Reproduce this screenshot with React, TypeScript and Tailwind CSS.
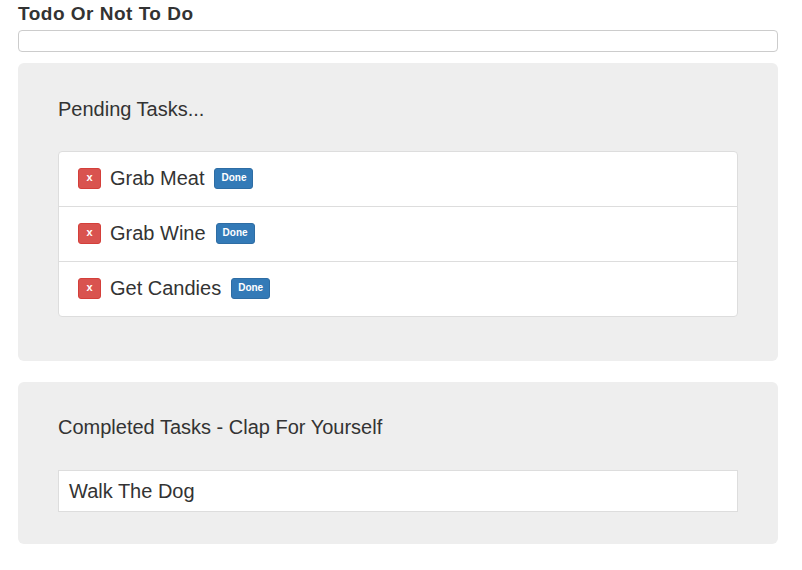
const pending = ["Grab Meat", "Grab Wine", "Get Candies"]
const completed = ["Walk The Dog"]

const font = { fontFamily: '"Liberation Sans", Arial, sans-serif' }

const TaskRow = ({ name, last }: { name: string; last: boolean }) => (
    <li className={`flex items-center gap-[9px] px-[19px] pb-[2px] ${last ? "h-[54px]" : "h-[55px] border-b border-[#ddd]"}`}>
        <button className="flex h-[21px] w-[23px] items-center justify-center rounded-[3px] border border-[#d43f3a] bg-[#d9534f] pb-[2px] text-[11px] font-bold leading-none text-white">
            x
        </button>
        <span className="text-[20px] leading-[24px] text-[#333]">{name}</span>
        <button className="ml-[1px] flex h-[21px] items-center rounded-[3px] border border-[#2e6da4] bg-[#337ab7] px-[6px] text-[10px] font-bold leading-none text-white">
            Done
        </button>
    </li>
)

export default function App() {
    return (
        <div className="min-h-[570px] w-[802px] bg-white pb-[20px] pl-[18px] pr-[24px]" style={font}>
            <h1 className="pt-[4px] text-[19px] font-bold leading-[20px] tracking-[0.5px] text-[#333]">Todo Or Not To Do</h1>
            <input type="text" className="mt-[6px] block h-[22px] w-full rounded-[4px] border border-[#ccc] bg-white" />

            <div className="mt-[11px] rounded-[6px] bg-[#eee] px-[40px] pb-[44px] pt-[34px]">
                <h2 className="text-[20px] leading-[24px] text-[#333]">Pending Tasks...</h2>
                <ul className="mt-[30px] rounded-[4px] border border-[#ddd] bg-white">
                    {pending.map((t, i) => (
                        <TaskRow key={t} name={t} last={i === pending.length - 1} />
                    ))}
                </ul>
            </div>

            <div className="mt-[21px] rounded-[6px] bg-[#eee] px-[40px] pb-[32px] pt-[33px]">
                <h2 className="text-[20px] leading-[24px] text-[#333]">Completed Tasks - Clap For Yourself</h2>
                <ul className="mt-[31px]">
                    {completed.map((t) => (
                        <li key={t} className="flex h-[42px] items-center border border-[#ddd] bg-white px-[10px] text-[20px] leading-[24px] text-[#333]">
                            {t}
                        </li>
                    ))}
                </ul>
            </div>
        </div>
    )
}
